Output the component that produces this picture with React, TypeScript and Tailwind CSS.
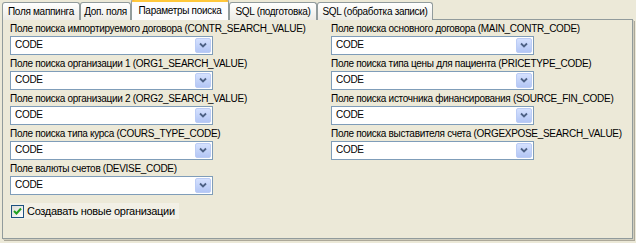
import React from "react";

const tabs = [
  { label: "Поля маппинга", w: "w-[78px]" },
  { label: "Доп. поля", w: "w-[51px]" },
  { label: "Параметры поиска", w: "w-[98px]", active: true },
  { label: "SQL (подготовка)", w: "w-[88px]" },
  { label: "SQL (обработка записи)", w: "w-[116px]" },
];

const leftFields = [
  "Поле поиска импортируемого договора (CONTR_SEARCH_VALUE)",
  "Поле поиска организации 1 (ORG1_SEARCH_VALUE)",
  "Поле поиска организации 2 (ORG2_SEARCH_VALUE)",
  "Поле поиска типа курса (COURS_TYPE_CODE)",
  "Поле валюты счетов (DEVISE_CODE)",
];

const rightFields = [
  "Поле поиска основного договора (MAIN_CONTR_CODE)",
  "Поле поиска типа цены для пациента (PRICETYPE_CODE)",
  "Поле поиска источника финансирования (SOURCE_FIN_CODE)",
  "Поле поиска выставителя счета (ORGEXPOSE_SEARCH_VALUE)",
];

function Combo() {
  return (
    <div className="flex h-[20px] w-[203px] items-stretch border border-[#7F9DB9] bg-white p-[1px]">
      <div className="flex flex-1 items-center pl-[3px] text-[10px] leading-none text-black">CODE</div>
      <div className="flex w-[16px] items-center justify-center rounded-[2px] border border-[#BBCCF5] bg-gradient-to-b from-[#D5E1FE] to-[#B3C6F5]">
        <svg width="8" height="6" viewBox="0 0 8 6">
          <path d="M1 1.5 L4 4.5 L7 1.5" fill="none" stroke="#4D6185" strokeWidth="1.8" />
        </svg>
      </div>
    </div>
  );
}

function Field({ label }: { label: string }) {
  return (
    <div className="flex h-[35px] flex-col">
      <div className="h-[16px] whitespace-nowrap pt-[2px] text-[10px] leading-[13px] text-black">{label}</div>
      <Combo />
    </div>
  );
}

export default function App() {
  return (
    <div
      className="relative h-[243px] w-[636px] overflow-hidden bg-[#ECE9D8] tracking-[-0.3px]"
      style={{ fontFamily: '"Liberation Sans", Arial, sans-serif' }}
    >
      {/* tab strip */}
      <div className="relative z-10 flex h-[20px] items-end pl-[2px]">
        {tabs.map((t) =>
          t.active ? (
            <div
              key={t.label}
              className={`${t.w} flex h-[21px] flex-col rounded-t-[3px] border-x border-[#919B9C] bg-[#FCFCFE]`}
            >
              <div className="h-[3px] rounded-t-[3px] border-t border-[#E68B2C] bg-[#FFC83C]" />
              <div className="flex flex-1 items-center justify-center whitespace-nowrap pb-[2px] text-[10px] text-black">
                {t.label}
              </div>
            </div>
          ) : (
            <div
              key={t.label}
              className={`${t.w} flex h-[18px] items-center justify-center whitespace-nowrap rounded-t-[3px] border border-b-0 border-[#919B9C] bg-gradient-to-b from-white to-[#ECEBE5] text-[10px] text-black`}
            >
              {t.label}
            </div>
          ),
        )}
      </div>

      {/* panel */}
      <div className="mx-[2px] -mt-[1px] h-[220px] w-[631px] border border-[#919B9C] bg-[#ECE9D8] shadow-[1px_1px_0_#D0CEBF,2px_2px_0_#ACA899]">
        <div className="flex pl-[7px]">
          <div className="flex w-[321px] flex-col">
            {leftFields.map((f) => (
              <Field key={f} label={f} />
            ))}
            <div className="mt-[8px] flex h-[16px] w-[169px] items-center bg-[#F2F0E6] pl-[1px]">
              <div className="flex h-[13px] w-[13px] items-center justify-center border border-[#1C5180] bg-gradient-to-br from-[#DCDCD7] to-white">
                <svg width="9" height="9" viewBox="0 0 9 9">
                  <path d="M1 4 L3.5 6.5 L8 1.5" fill="none" stroke="#21A121" strokeWidth="2" />
                </svg>
              </div>
              <span className="ml-[3px] whitespace-nowrap text-[11px] leading-none text-black">
                Создавать новые организации
              </span>
            </div>
          </div>
          <div className="flex flex-col">
            {rightFields.map((f) => (
              <Field key={f} label={f} />
            ))}
          </div>
        </div>
      </div>
    </div>
  );
}
